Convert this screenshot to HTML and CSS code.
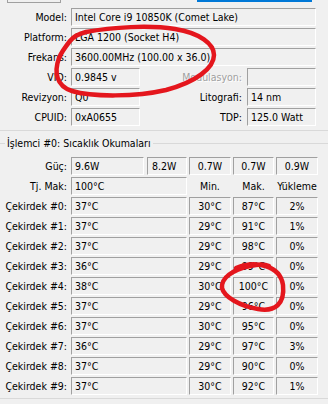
FILE: index.html
```html
<!DOCTYPE html>
<html lang="tr">
<head>
<meta charset="utf-8">
<title>İşlemci</title>
<link rel="stylesheet" href="styles.css">
</head>
<body>
<div class="win">
  <div class="strip"><span class="tab-edge"></span><span class="blue-bar"></span></div>

  <section class="cpu">
    <div class="row"><span class="lbl">Model:</span><span class="box wide">Intel Core i9 10850K (Comet Lake)</span></div>
    <div class="row"><span class="lbl">Platform:</span><span class="box wide">LGA 1200 (Socket H4)</span></div>
    <div class="row"><span class="lbl">Frekans:</span><span class="box wide">3600.00MHz (100.00 x 36.0)</span></div>
    <div class="row"><span class="lbl">VID:</span><span class="box sm">0.9845 v</span><span class="lbl2 dis">Modulasyon:</span><span class="box sm"></span></div>
    <div class="row"><span class="lbl">Revizyon:</span><span class="box sm">Q0</span><span class="lbl2">Litografi:</span><span class="box sm">14 nm</span></div>
    <div class="row"><span class="lbl">CPUID:</span><span class="box sm">0xA0655</span><span class="lbl2">TDP:</span><span class="box sm">125.0 Watt</span></div>
  </section>

  <section class="temps">
    <div class="gtitle"><span class="gline short"></span><span class="gtext">İşlemci #0: Sıcaklık Okumaları</span><span class="gline"></span></div>
    <div class="grid">
      <span class="glbl">Güç:</span>
      <span class="split"><span class="box p1">9.6W</span><span class="box p2">8.2W</span></span>
      <span class="box c">0.7W</span><span class="box c">0.7W</span><span class="box c">0.9W</span>

      <span class="glbl">Tj. Mak:</span><span class="box">100°C</span>
      <span class="hdr">Min.</span><span class="hdr">Mak.</span><span class="hdr">Yükleme</span>

      <span class="glbl">Çekirdek #0:</span><span class="box">37°C</span><span class="box c">30°C</span><span class="box c">87°C</span><span class="box c">2%</span>
      <span class="glbl">Çekirdek #1:</span><span class="box">37°C</span><span class="box c">29°C</span><span class="box c">91°C</span><span class="box c">1%</span>
      <span class="glbl">Çekirdek #2:</span><span class="box">37°C</span><span class="box c">29°C</span><span class="box c">98°C</span><span class="box c">0%</span>
      <span class="glbl">Çekirdek #3:</span><span class="box">36°C</span><span class="box c">29°C</span><span class="box c">99°C</span><span class="box c">0%</span>
      <span class="glbl">Çekirdek #4:</span><span class="box">38°C</span><span class="box c">30°C</span><span class="box c">100°C</span><span class="box c">0%</span>
      <span class="glbl">Çekirdek #5:</span><span class="box">37°C</span><span class="box c">29°C</span><span class="box c">96°C</span><span class="box c">0%</span>
      <span class="glbl">Çekirdek #6:</span><span class="box">37°C</span><span class="box c">30°C</span><span class="box c">95°C</span><span class="box c">0%</span>
      <span class="glbl">Çekirdek #7:</span><span class="box">36°C</span><span class="box c">29°C</span><span class="box c">97°C</span><span class="box c">3%</span>
      <span class="glbl">Çekirdek #8:</span><span class="box">37°C</span><span class="box c">29°C</span><span class="box c">90°C</span><span class="box c">0%</span>
      <span class="glbl">Çekirdek #9:</span><span class="box">37°C</span><span class="box c">30°C</span><span class="box c">92°C</span><span class="box c">1%</span>
    </div>
  </section>

  <svg class="marks" width="328" height="404" viewBox="0 0 328 404" aria-hidden="true">
    <path d="M70 41 C74 36 78 34 86 32 C112 27 150 25 175 29 C200 33 214 44 214 55 C214 68 196 82 166 90 C136 97 92 97 72 91 C56 86 54 72 59 58 C62 51 66 46 70 41"/>
    <path d="M236 268 C255 260 280 265 283 285 C285 304 275 312 258 309 C240 306 224 297 222 288 C221 278 232 270 250 266 C258 264 265 264 269 266"/>
  </svg>
</div>
</body>
</html>
```

FILE: styles.css
```css
* { box-sizing: border-box; }

body {
  margin: 0;
  background: #f0f0f0;
  font-family: "DejaVu Sans Condensed", "DejaVu Sans", "Liberation Sans", sans-serif;
  font-stretch: condensed;
  font-size: 10.5px;
  color: #000;
}

.win {
  position: relative;
  width: 328px;
  height: 404px;
  overflow: hidden;
}

.strip {
  height: 8px;
  display: flex;
  align-items: flex-start;
}

.tab-edge {
  margin-left: 7px;
  width: 54px;
  height: 3px;
  border: 1px solid #a0a0a0;
  border-top: 0;
}

.blue-bar {
  margin-left: 136px;
  width: 115px;
  height: 2px;
  background: #0078d7;
}

.cpu {
  display: flex;
  flex-direction: column;
  gap: 2px;
  padding-bottom: 4px;
  border-bottom: 1px solid #d9d9d9;
}

.row {
  display: flex;
  align-items: center;
  height: 18px;
}

.lbl {
  width: 67px;
  margin-right: 4px;
  text-align: right;
  white-space: nowrap;
}

.lbl2 {
  flex: 0 0 102px;
  margin-right: 5px;
  text-align: right;
  white-space: nowrap;
}

.dis {
  color: #a0a0a0;
  text-shadow: 1px 1px 0 #fff;
}

.box {
  display: block;
  height: 18px;
  border: 1px solid;
  border-color: #a0a0a0 #ffffff #ffffff #a0a0a0;
  padding-left: 3px;
  line-height: 16px;
  white-space: nowrap;
  overflow: hidden;
}

.wide { width: 245px; }
.sm { width: 69px; }

.temps {
  margin-top: 5px;
  padding-bottom: 3px;
  border-bottom: 1px solid #d9d9d9;
}

.gtitle {
  display: flex;
  align-items: center;
  height: 14px;
}

.gline {
  flex: 1;
  height: 1px;
  background: #d9d9d9;
}

.gline.short { flex: 0 0 5px; }

.gtext {
  padding: 0 2px;
  white-space: nowrap;
}

.grid {
  margin-top: 7px;
  display: grid;
  grid-template-columns: 69px 116px 42px 41px 42px;
  grid-auto-rows: 18px;
  column-gap: 2px;
  row-gap: 2px;
}

.glbl {
  padding-right: 2px;
  text-align: right;
  line-height: 18px;
  white-space: nowrap;
}

.split {
  display: flex;
  gap: 3px;
}

.p1 { width: 73px; }
.p2 { width: 40px; padding-left: 4px; }

.box.c {
  padding-left: 0;
  text-align: center;
}

.hdr {
  text-align: center;
  line-height: 18px;
  white-space: nowrap;
}

.marks {
  position: absolute;
  left: 0;
  top: 0;
  pointer-events: none;
}

.marks path {
  fill: none;
  stroke: #e4161d;
  stroke-width: 4.5;
  stroke-linecap: round;
  stroke-linejoin: round;
}
```
